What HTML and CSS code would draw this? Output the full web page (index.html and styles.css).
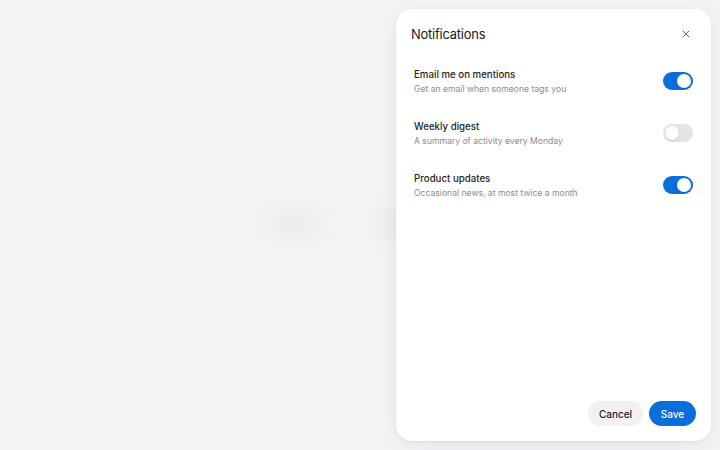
FILE: index.html
```html
<!DOCTYPE html>
<html lang="en">
<head>
<meta charset="utf-8">
<title>Notifications</title>
<link rel="stylesheet" href="styles.css">
</head>
<body>
<div class="backdrop">
  <div class="ghost ghost-a"></div>
  <div class="ghost ghost-b"></div>
</div>
<aside class="panel">
  <header class="panel-head">
    <h1 class="title">Notifications</h1>
    <button class="close" aria-label="Close">
      <svg width="10" height="10" viewBox="0 0 10 10"><path d="M2 2 L8 8 M8 2 L2 8" stroke="#666" stroke-width="1" stroke-linecap="round" fill="none"/></svg>
    </button>
  </header>
  <ul class="list">
    <li class="row">
      <div class="text">
        <div class="label">Email me on mentions</div>
        <div class="desc">Get an email when someone tags you</div>
      </div>
      <span class="toggle on"><span class="knob"></span></span>
    </li>
    <li class="row">
      <div class="text">
        <div class="label">Weekly digest</div>
        <div class="desc">A summary of activity every Monday</div>
      </div>
      <span class="toggle"><span class="knob"></span></span>
    </li>
    <li class="row">
      <div class="text">
        <div class="label">Product updates</div>
        <div class="desc">Occasional news, at most twice a month</div>
      </div>
      <span class="toggle on"><span class="knob"></span></span>
    </li>
  </ul>
  <footer class="actions">
    <button class="btn btn-secondary">Cancel</button>
    <button class="btn btn-primary">Save</button>
  </footer>
</aside>
</body>
</html>
```

FILE: styles.css
```css
* { box-sizing: border-box; }
html, body { height: 100%; }
body {
  margin: 0;
  background: #f4f5f7;
  font-family: Inter, "Noto Sans", sans-serif;
  color: #1c1c1e;
  display: flex;
  justify-content: flex-end;
  padding: 9px;
  overflow: hidden;
  position: relative;
}
.backdrop {
  position: absolute;
  inset: 0;
  pointer-events: none;
}
.ghost {
  position: absolute;
  background: #ecedf0;
  filter: blur(10px);
  border-radius: 6px;
}
.ghost-a { left: 265px; top: 208px; width: 60px; height: 32px; }
.ghost-b { left: 378px; top: 208px; width: 30px; height: 32px; }
.panel {
  position: relative;
  width: 315px;
  height: 100%;
  background: #ffffff;
  border-radius: 16px;
  box-shadow: 0 4px 24px rgba(20, 24, 40, 0.08), 0 1px 3px rgba(20, 24, 40, 0.05);
  padding: 14px 15px 15px;
  display: flex;
  flex-direction: column;
}
.panel-head {
  display: flex;
  align-items: center;
  justify-content: space-between;
  height: 22px;
}
.title {
  margin: 1px 0 0;
  font-size: 12.9px;
  font-weight: 400;
  letter-spacing: -0.2px;
  color: #1a1a1a;
}
.close {
  width: 22px;
  height: 22px;
  border: 0;
  background: transparent;
  display: flex;
  align-items: center;
  justify-content: center;
  padding: 0;
  margin-right: -1px;
}
.list {
  list-style: none;
  margin: 10px 0 0;
  padding: 0;
  flex: 1;
}
.row {
  display: flex;
  align-items: center;
  justify-content: space-between;
  padding: 12px 3px;
  height: 52px;
}
.text { padding-top: 2px; }
.label {
  font-size: 9.7px;
  font-weight: 500;
  line-height: 13px;
  color: #1f1f22;
}
.desc {
  margin-top: 2px;
  font-size: 8.6px;
  line-height: 13px;
  color: #8c8c90;
}
.toggle {
  width: 30px;
  height: 18px;
  border-radius: 9px;
  background: #e4e4e7;
  position: relative;
  flex: none;
}
.toggle.on { background: #0a6edb; }
.knob {
  position: absolute;
  top: 2px;
  left: 2px;
  width: 14px;
  height: 14px;
  border-radius: 50%;
  background: #fff;
  box-shadow: 0 1px 2px rgba(0,0,0,0.12);
}
.toggle.on .knob { left: 14px; }
.actions {
  display: flex;
  justify-content: flex-end;
  gap: 6px;
}
.btn {
  height: 25px;
  border: 0;
  border-radius: 13px;
  font-family: inherit;
  font-size: 10px;
  font-weight: 500;
  padding: 0;
}
.btn-secondary { background: #f1f1f3; color: #1c1c1e; width: 55px; }
.btn-primary { background: #0a6edb; color: #fff; width: 47px; }
```
